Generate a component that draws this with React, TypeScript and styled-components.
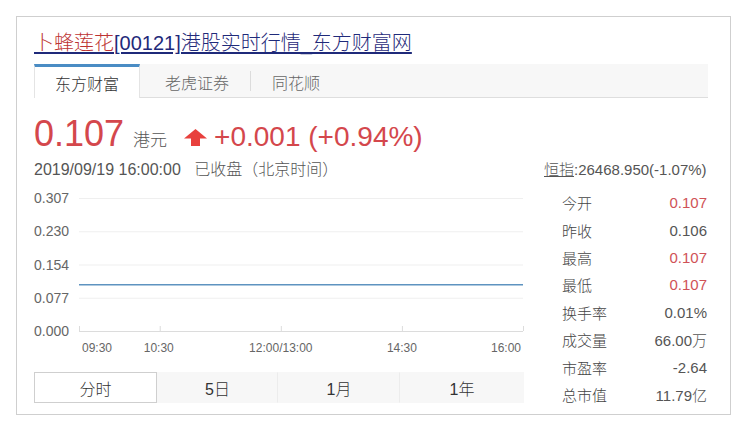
import React from "react";
import styled, { createGlobalStyle } from "styled-components";

const GlobalStyle = createGlobalStyle`
	body {
		margin: 0;
		background: #fff;
		font-family: "Liberation Sans", Arial, "Noto Sans CJK SC", sans-serif;
		font-weight: 300;
	}
`;

const RED = "#d4474c";

const Page = styled.div`
	padding: 16px;
`;

const Card = styled.div`
	width: 715px;
	height: 399px;
	box-sizing: border-box;
	border: 1px solid #cfcfcf;
	padding: 14px 22px 10px 17px;
`;

const Title = styled.a`
	display: inline-block;
	font-size: 20px;
	line-height: 24px;
	color: #1f2a7a;
	text-decoration: underline;
	text-underline-offset: 2px;
	cursor: pointer;
`;

const TitleRed = styled.span`
	color: #bd3433;
`;

const TabBar = styled.div`
	display: flex;
	margin-top: 9px;
	height: 34px;
	box-sizing: border-box;
	background: #f7f7f7;
	border-bottom: 1px solid #dedede;
`;

const Tab = styled.div<{ $active?: boolean }>`
	display: flex;
	align-items: center;
	padding: 0 20px;
	margin-right: ${(p) => (p.$active ? "4px" : "0")};
	font-size: 16px;
	color: ${(p) => (p.$active ? "#333" : "#666")};
	background: ${(p) => (p.$active ? "#fff" : "transparent")};
	border-top: 3px solid ${(p) => (p.$active ? "#4a8cc4" : "transparent")};
	border-left: 1px solid ${(p) => (p.$active ? "#e4e4e4" : "transparent")};
	border-right: 1px solid ${(p) => (p.$active ? "#e4e4e4" : "transparent")};
	margin-bottom: ${(p) => (p.$active ? "-1px" : "0")};
`;

const TabSep = styled.div`
	width: 1px;
	height: 20px;
	align-self: center;
	background: #dcdcdc;
`;

const PriceRow = styled.div`
	display: flex;
	align-items: baseline;
	margin-top: 16px;
	height: 40px;
	line-height: 40px;
`;

const Price = styled.span`
	font-size: 36px;
	color: ${RED};
`;

const Unit = styled.span`
	font-size: 17px;
	color: #555;
	margin-left: 9px;
`;

const Arrow = styled.svg`
	margin-left: 17px;
	margin-right: 7px;
	align-self: center;
	margin-top: 6px;
`;

const Change = styled.span`
	font-size: 28px;
	color: ${RED};
`;

const Body = styled.div`
	display: flex;
	margin-top: 6px;
`;

const LeftCol = styled.div`
	width: 490px;
`;

const RightCol = styled.div`
	width: 163px;
	margin-left: 20px;
`;

const DateLine = styled.div`
	font-size: 16px;
	line-height: 20px;
	color: #555;
	white-space: pre;
`;

const IndexLine = styled.div`
	font-size: 15px;
	line-height: 20px;
	color: #555;
	white-space: nowrap;
`;

const IndexName = styled.span`
	text-decoration: underline;
`;

const StatList = styled.div`
	margin-top: 9px;
	padding-left: 18px;
`;

const StatRow = styled.div`
	display: flex;
	justify-content: space-between;
	height: 27.4px;
	align-items: center;
	font-size: 15px;
	color: #444;
`;

const StatValue = styled.span<{ $up?: boolean }>`
	color: ${(p) => (p.$up ? "#d05257" : "#555")};
`;

const RangeBar = styled.div`
	display: flex;
	margin-top: 6px;
	height: 31px;
	background: #f7f7f7;
`;

const RangeButton = styled.div<{ $active?: boolean; $w: number }>`
	width: ${(p) => p.$w}px;
	box-sizing: border-box;
	display: flex;
	align-items: center;
	justify-content: center;
	font-size: 16px;
	color: #333;
	background: ${(p) => (p.$active ? "#fff" : "transparent")};
	border: 1px solid ${(p) => (p.$active ? "#cfcfcf" : "transparent")};
	border-right: 1px solid ${(p) => (p.$active ? "#cfcfcf" : "#ececec")};
	&:last-child {
		border-right-color: transparent;
	}
`;

const stats: { label: string; value: string; up?: boolean }[] = [
	{ label: "今开", value: "0.107", up: true },
	{ label: "昨收", value: "0.106" },
	{ label: "最高", value: "0.107", up: true },
	{ label: "最低", value: "0.107", up: true },
	{ label: "换手率", value: "0.01%" },
	{ label: "成交量", value: "66.00万" },
	{ label: "市盈率", value: "-2.64" },
	{ label: "总市值", value: "11.79亿" },
];

const ranges = [
	{ label: "分时", w: 123, active: true },
	{ label: "5日", w: 121 },
	{ label: "1月", w: 122 },
	{ label: "1年", w: 124 },
];

// chart geometry, local to the svg
const X0 = 45;
const X1 = 489;
const TOP = 18;
const BOTTOM = 151;
const yLabels = ["0.307", "0.230", "0.154", "0.077", "0.000"];
const minuteX = (m: number) => X0 + (m / 330) * (X1 - X0);

const Chart = () => {
	const step = (BOTTOM - TOP) / 4;
	const priceY = BOTTOM - (0.107 / 0.307) * (BOTTOM - TOP);
	const ticks = [0, 60, 150, 240, 330];
	return (
		<svg width={490} height={186} style={{ display: "block" }}>
			{yLabels.map((l, i) => (
				<g key={l}>
					{i < 4 && <line x1={X0} x2={X1} y1={TOP + i * step + 0.5} y2={TOP + i * step + 0.5} stroke="#efefef" />}
					<text x={0} y={TOP + i * step + 5} fontSize={14} fill="#666" fontFamily="Liberation Sans, Arial, sans-serif">
						{l}
					</text>
				</g>
			))}
			<line x1={X0} x2={X1} y1={BOTTOM + 0.5} y2={BOTTOM + 0.5} stroke="#dcdcdc" />
			{ticks.map((m) => (
				<line key={m} x1={minuteX(m) + 0.5} x2={minuteX(m) + 0.5} y1={BOTTOM - 5} y2={BOTTOM} stroke="#dcdcdc" />
			))}
			<line x1={X0} x2={X1} y1={priceY} y2={priceY} stroke="#5e93c0" strokeWidth={1.5} />
			<g fontSize={12} fill="#666" fontFamily="Liberation Sans, Arial, sans-serif">
				<text x={48} y={172}>09:30</text>
				<text x={minuteX(60) - 1} y={172} textAnchor="middle">10:30</text>
				<text x={minuteX(150)} y={172} textAnchor="middle">12:00/13:00</text>
				<text x={minuteX(240)} y={172} textAnchor="middle">14:30</text>
				<text x={487} y={172} textAnchor="end">16:00</text>
			</g>
		</svg>
	);
};

const App: React.FC = () => {
	return (
		<Page>
			<GlobalStyle />
			<Card>
				<Title>
					<TitleRed>卜蜂莲花</TitleRed>[00121]港股实时行情_东方财富网
				</Title>

				<TabBar>
					<Tab $active>东方财富</Tab>
					<Tab>老虎证券</Tab>
					<TabSep />
					<Tab>同花顺</Tab>
				</TabBar>

				<PriceRow>
					<Price>0.107</Price>
					<Unit>港元</Unit>
					<Arrow width={23} height={17} viewBox="0 0 23 17">
						<path d="M11.5 0 L23 9.5 H16 V17 H7 V9.5 H0 Z" fill="#e8403d" />
					</Arrow>
					<Change>+0.001 (+0.94%)</Change>
				</PriceRow>

				<Body>
					<LeftCol>
						<DateLine>2019/09/19 16:00:00   已收盘（北京时间）</DateLine>
						<Chart />
						<RangeBar>
							{ranges.map((r) => (
								<RangeButton key={r.label} $w={r.w} $active={r.active}>
									{r.label}
								</RangeButton>
							))}
						</RangeBar>
					</LeftCol>

					<RightCol>
						<IndexLine>
							<IndexName>恒指</IndexName>:26468.950(-1.07%)
						</IndexLine>
						<StatList>
							{stats.map((s) => (
								<StatRow key={s.label}>
									<span>{s.label}</span>
									<StatValue $up={s.up}>{s.value}</StatValue>
								</StatRow>
							))}
						</StatList>
					</RightCol>
				</Body>
			</Card>
		</Page>
	);
};

export default App;
